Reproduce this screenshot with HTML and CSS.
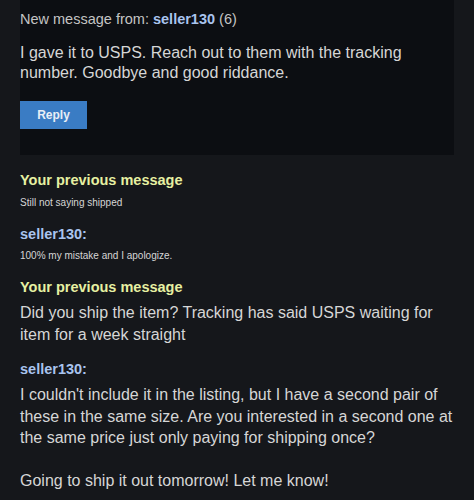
FILE: index.html
```html
<!DOCTYPE html>
<html lang="en">
<head>
    <meta charset="UTF-8">
    <meta name="viewport" content="width=device-width, initial-scale=1.0">
    <title>Messages</title>
    <link rel="stylesheet" href="styles.css">
</head>
<body>
    <div class="new-message">
        <p class="from">New message from: <strong>seller130</strong> (6)</p>
        <p class="big">I gave it to USPS. Reach out to them with the tracking number. Goodbye and good riddance.</p>
        <button class="reply">Reply</button>
    </div>

    <div class="thread">
        <h3 class="mine">Your previous message</h3>
        <p class="small">Still not saying shipped</p>

        <h3 class="theirs">seller130:</h3>
        <p class="small">100% my mistake and I apologize.</p>

        <h3 class="mine">Your previous message</h3>
        <p class="big">Did you ship the item? Tracking has said USPS waiting for item for a week straight</p>

        <h3 class="theirs">seller130:</h3>
        <p class="big">I couldn't include it in the listing, but I have a second pair of these in the same size. Are you interested in a second one at the same price just only paying for shipping once?<br><br>Going to ship it out tomorrow! Let me know!</p>
    </div>
</body>
</html>
```

FILE: styles.css
```css
body {
    margin: 0;
    background-color: #15171b;
    color: #d6d6d6;
    font-family: "Liberation Sans", Arial, sans-serif;
}

p, h3 {
    margin: 0;
}

.new-message {
    background-color: #0c0e12;
    margin: 0 20px;
    padding: 10px 0 26px;
}

.from {
    font-size: 14.5px;
    line-height: 18px;
    color: #c4c4c4;
}

.from strong {
    color: #a9c4ee;
}

.big {
    font-size: 16px;
    line-height: 21.5px;
}

.new-message .big {
    margin-top: 15px;
    line-height: 20px;
}

.reply {
    display: block;
    margin-top: 18px;
    width: 67px;
    height: 28px;
    border: none;
    background-color: #3a7cc4;
    color: #e8eef6;
    font-family: inherit;
    font-size: 12px;
    font-weight: bold;
}

.thread {
    padding: 15px 20px;
}

h3 {
    font-size: 14.5px;
    line-height: 20px;
}

.mine {
    color: #e6f0a2;
}

.theirs {
    color: #a9c4ee;
}

.small {
    font-size: 10px;
    line-height: 14px;
    margin-top: 6px;
}

.theirs + .small {
    margin-top: 5px;
}

.small + h3,
.big + h3 {
    margin-top: 14px;
}

.thread .big {
    margin-top: 5px;
}
```
